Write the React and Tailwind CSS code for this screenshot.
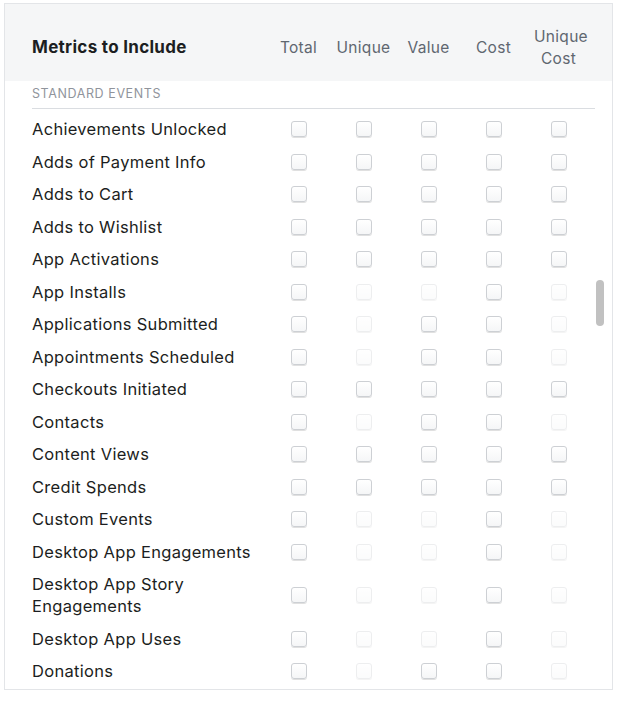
import React from "react";

const COLUMNS = ["Total", "Unique", "Value", "Cost", "Unique Cost"];

// 1 = enabled, 0 = disabled (Total, Unique, Value, Cost, Unique Cost)
const ALL = [1, 1, 1, 1, 1];
const TVC = [1, 0, 1, 1, 0];
const TC = [1, 0, 0, 1, 0];

const EVENTS = [
  { name: "Achievements Unlocked", cols: ALL },
  { name: "Adds of Payment Info", cols: ALL },
  { name: "Adds to Cart", cols: ALL },
  { name: "Adds to Wishlist", cols: ALL },
  { name: "App Activations", cols: ALL },
  { name: "App Installs", cols: TC },
  { name: "Applications Submitted", cols: TVC },
  { name: "Appointments Scheduled", cols: TVC },
  { name: "Checkouts Initiated", cols: ALL },
  { name: "Contacts", cols: TVC },
  { name: "Content Views", cols: ALL },
  { name: "Credit Spends", cols: ALL },
  { name: "Custom Events", cols: TC },
  { name: "Desktop App Engagements", cols: TC },
  { name: "Desktop App Story Engagements", cols: TC },
  { name: "Desktop App Uses", cols: TC },
  { name: "Donations", cols: TVC },
];

const Checkbox = ({ enabled }) => (
  <span
    className={`block w-4 h-4 rounded-[3px] border border-[#cdd0d4] bg-gradient-to-b from-white to-[#f5f6f7] shadow-[0_1px_0_rgba(0,0,0,0.12)] ${
      enabled ? "" : "opacity-35"
    }`}
  />
);

export default function App() {
  return (
    <div className="pt-[3px] pl-[4px] pr-[4px] bg-white font-['Inter','Liberation_Sans',sans-serif]">
      <div className="relative h-[687px] border border-[#e3e5e8] overflow-hidden bg-white">
        {/* header */}
        <div className="h-[77px] pt-[10px] bg-[#f5f6f7] pl-[27px] grid grid-cols-[234px_repeat(5,65px)] items-center">
          <div className="text-[17px] font-bold tracking-[0.3px] text-[#1c1e21]">Metrics to Include</div>
          {COLUMNS.map((c) => (
            <div
              key={c}
              className={`text-center text-[15.5px] tracking-[0.3px] leading-[22px] text-[#606770] ${
                c === "Unique Cost" ? "px-[8px]" : ""
              }`}
            >
              {c}
            </div>
          ))}
        </div>

        {/* section */}
        <div className="pl-[27px] pr-[17px]">
          <div className="pt-[5px] pb-[6px] text-[12.5px] leading-[16px] tracking-[0.6px] text-[#90949c] border-b border-[#dadde1]">
            STANDARD EVENTS
          </div>
          <div className="pt-[4px]">
            {EVENTS.map((ev) => (
              <div
                key={ev.name}
                className="grid grid-cols-[234px_repeat(5,65px)] items-center py-[5.25px]"
              >
                <div className="text-[16.5px] tracking-[0.3px] leading-[22px] text-[#1c1e21] pr-[6px]">
                  {ev.name}
                </div>
                {ev.cols.map((on, i) => (
                  <div key={i} className="flex justify-center">
                    <Checkbox enabled={!!on} />
                  </div>
                ))}
              </div>
            ))}
          </div>
        </div>

        {/* scrollbar */}
        <div className="absolute top-[276px] right-[8px] w-[8px] h-[46px] rounded-full bg-[#c1c1c1]" />
      </div>
    </div>
  );
}
